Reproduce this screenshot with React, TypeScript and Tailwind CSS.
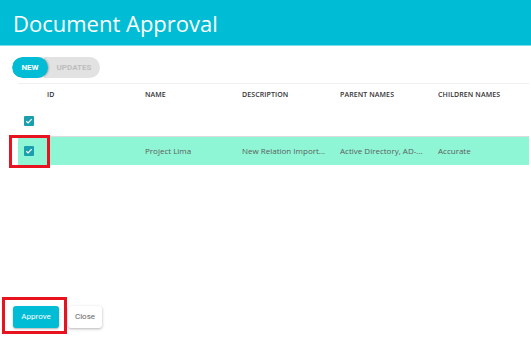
import React from "react";

function Check() {
  return (
    <div className="w-[10px] h-[10px] bg-[#1a9fb0] rounded-[1px] flex items-center justify-center">
      <svg width="8" height="8" viewBox="0 0 8 8">
        <path d="M1.3 4.2 L3.1 5.9 L6.7 2.2" fill="none" stroke="#ffffff" strokeWidth="1.2" />
      </svg>
    </div>
  );
}

export default function App() {
  const cols = "grid grid-cols-[29px_98px_97px_98px_98px_1fr]";
  return (
    <div
      className="relative w-[531px] h-[337px] bg-white overflow-hidden flex flex-col"
      style={{ fontFamily: '"Open Sans", sans-serif' }}
    >
      <div className="h-[46px] shrink-0 bg-[#00bcd4] border-b border-[#7fdce8] flex items-center px-[13px] text-white text-[22px] leading-none">
        Document Approval
      </div>

      <div className="mt-[11px] ml-[12px] flex h-[21px] w-[88px] rounded-full overflow-hidden text-[8px] font-bold" style={{ fontFamily: 'Roboto, sans-serif' }}>
        <div className="w-[36px] bg-[#00bcd4] text-white flex items-center justify-center rounded-full shadow-[1px_0_2px_rgba(0,0,0,0.25)] z-10">
          NEW
        </div>
        <div className="flex-1 bg-[#e2e2e2] text-[#bdbdbd] flex items-center justify-center -ml-[4px] pl-[4px]">
          UPDATES
        </div>
      </div>

      <div className="mt-[5px] ml-[18px] mr-[2px] border-t border-[#efefef]">
        <div className={`${cols} h-[22px] items-center text-[7px] font-semibold text-[#333] tracking-[0.1px]`}>
          <div />
          <div>ID</div>
          <div>NAME</div>
          <div>DESCRIPTION</div>
          <div>PARENT NAMES</div>
          <div>CHILDREN NAMES</div>
        </div>
        <div className={`${cols} h-[30px] items-center`}>
          <div className="pl-[6px]">
            <Check />
          </div>
        </div>
        <div className={`${cols} h-[29px] items-center bg-[#8ff6d5] border-t border-[#dcdcdc] text-[8px] text-[#5c5c5c]`}>
          <div className="pl-[6px]">
            <Check />
          </div>
          <div />
          <div>Project Lima</div>
          <div>New Relation Import...</div>
          <div>Active Directory, AD-...</div>
          <div>Accurate</div>
        </div>
      </div>

      <div className="mt-auto mb-[9px] ml-[13px] flex gap-[9px] text-[8px]" style={{ fontFamily: 'Roboto, sans-serif' }}>
        <div className="w-[46px] h-[22px] bg-[#00bcd4] text-white rounded-[3px] flex items-center justify-center shadow-[0_1px_2px_rgba(0,0,0,0.3)]">
          Approve
        </div>
        <div className="w-[34px] h-[22px] bg-white text-[#666] rounded-[3px] flex items-center justify-center shadow-[0_1px_3px_rgba(0,0,0,0.3)]">
          Close
        </div>
      </div>

      <div className="absolute left-[9px] top-[135px] w-[41px] h-[33px] border-[3px] border-[#e8131f]" />
      <div className="absolute left-[2px] top-[297px] w-[65px] h-[37px] border-[3px] border-[#e8131f]" />
    </div>
  );
}
